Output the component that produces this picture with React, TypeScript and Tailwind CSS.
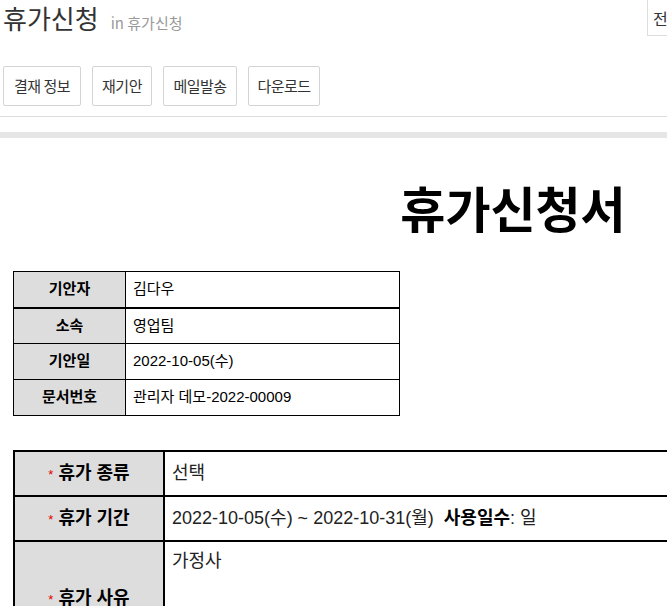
import React from 'react';

const font = { fontFamily: '"Noto Sans CJK KR", "Noto Sans", sans-serif' };
const docFont = { fontFamily: '"Liberation Sans", "Noto Sans CJK KR", sans-serif' };

const infoRows = [
  { label: '기안자', value: '김다우' },
  { label: '소속', value: '영업팀' },
  { label: '기안일', value: '2022-10-05(수)' },
  { label: '문서번호', value: '관리자 데모-2022-00009' },
];

const actions = [
  { name: '결재 정보', w: 'w-[78px]' },
  { name: '재기안', w: 'w-[60px]' },
  { name: '메일발송', w: 'w-[74px]' },
  { name: '다운로드', w: 'w-[72px]' },
];

function Req({ children }: { children: React.ReactNode }) {
  return (
    <span>
      <span className="text-[#e30000] text-[13px] font-normal mr-[5px]">*</span>
      {children}
    </span>
  );
}

export default function App() {
  return (
    <div className="w-[667px] h-[606px] overflow-hidden bg-white text-[#333]" style={font}>
      {/* header */}
      <div className="flex items-start h-[36px]">
        <div className="flex items-baseline pl-[3px]">
          <h1 className="text-[26px] leading-[36px] font-normal text-[#333]">휴가신청</h1>
          <span className="ml-[12px] text-[15px] text-[#999]">in 휴가신청</span>
        </div>
        <button className="ml-auto mr-[-40px] w-[60px] h-[36px] shrink-0 border border-t-0 border-[#ddd] bg-white text-[16px] text-[#333] text-left pl-[5px]">
          전체
        </button>
      </div>

      {/* toolbar */}
      <div className="mt-[30px] flex gap-[11px] pl-[3px] pb-[10px] border-b border-[#ddd]">
        {actions.map(a => (
          <button
            key={a.name}
            className={`${a.w} h-[40px] border border-[#d4d4d4] rounded-[2px] bg-white text-[15px] tracking-[-0.5px] text-[#333]`}
          >
            {a.name}
          </button>
        ))}
      </div>
      <div className="mt-[15px] h-[6px] bg-[#e6e6e6]" />

      {/* document */}
      <div className="w-[1026px] px-[13px] pt-[38px]" style={docFont}>
        <h2 className="text-center text-[49px] leading-[70px] font-bold text-black">휴가신청서</h2>

        <table className="mt-[25px] w-[387px] border-collapse text-black text-[15px]">
          <tbody>
            {infoRows.map((r, i) => (
              <tr key={r.label} className={i === 0 ? 'border-b-2 border-black' : ''}>
                <td className="w-[112px] h-[36px] border border-black bg-[#dddddd] text-center font-bold">{r.label}</td>
                <td className="h-[36px] border border-black pl-[7px]">{r.value}</td>
              </tr>
            ))}
          </tbody>
        </table>

        <table className="mt-[34px] w-full border-collapse border-2 border-black text-black">
          <tbody>
            <tr>
              <td className="w-[150px] h-[45px] border-2 border-black bg-[#dddddd] text-center text-[18px] font-bold">
                <Req>휴가 종류</Req>
              </td>
              <td className="h-[45px] border-2 border-black pl-[7px] text-[18px] text-[#222]">선택</td>
            </tr>
            <tr>
              <td className="w-[150px] h-[45px] border-2 border-black bg-[#dddddd] text-center text-[18px] font-bold">
                <Req>휴가 기간</Req>
              </td>
              <td className="h-[45px] border-2 border-black pl-[7px] text-[18px] text-[#222]">
                2022-10-05(수) ~ 2022-10-31(월)&nbsp;&nbsp;<b className="text-black">사용일수</b>: 일
              </td>
            </tr>
            <tr>
              <td className="w-[150px] h-[115px] border-2 border-black bg-[#dddddd] text-center text-[18px] font-bold">
                <Req>휴가 사유</Req>
              </td>
              <td className="h-[115px] border-2 border-black pl-[7px] pt-[6px] align-top text-[18px] text-[#222]">가정사</td>
            </tr>
          </tbody>
        </table>
      </div>
    </div>
  );
}
